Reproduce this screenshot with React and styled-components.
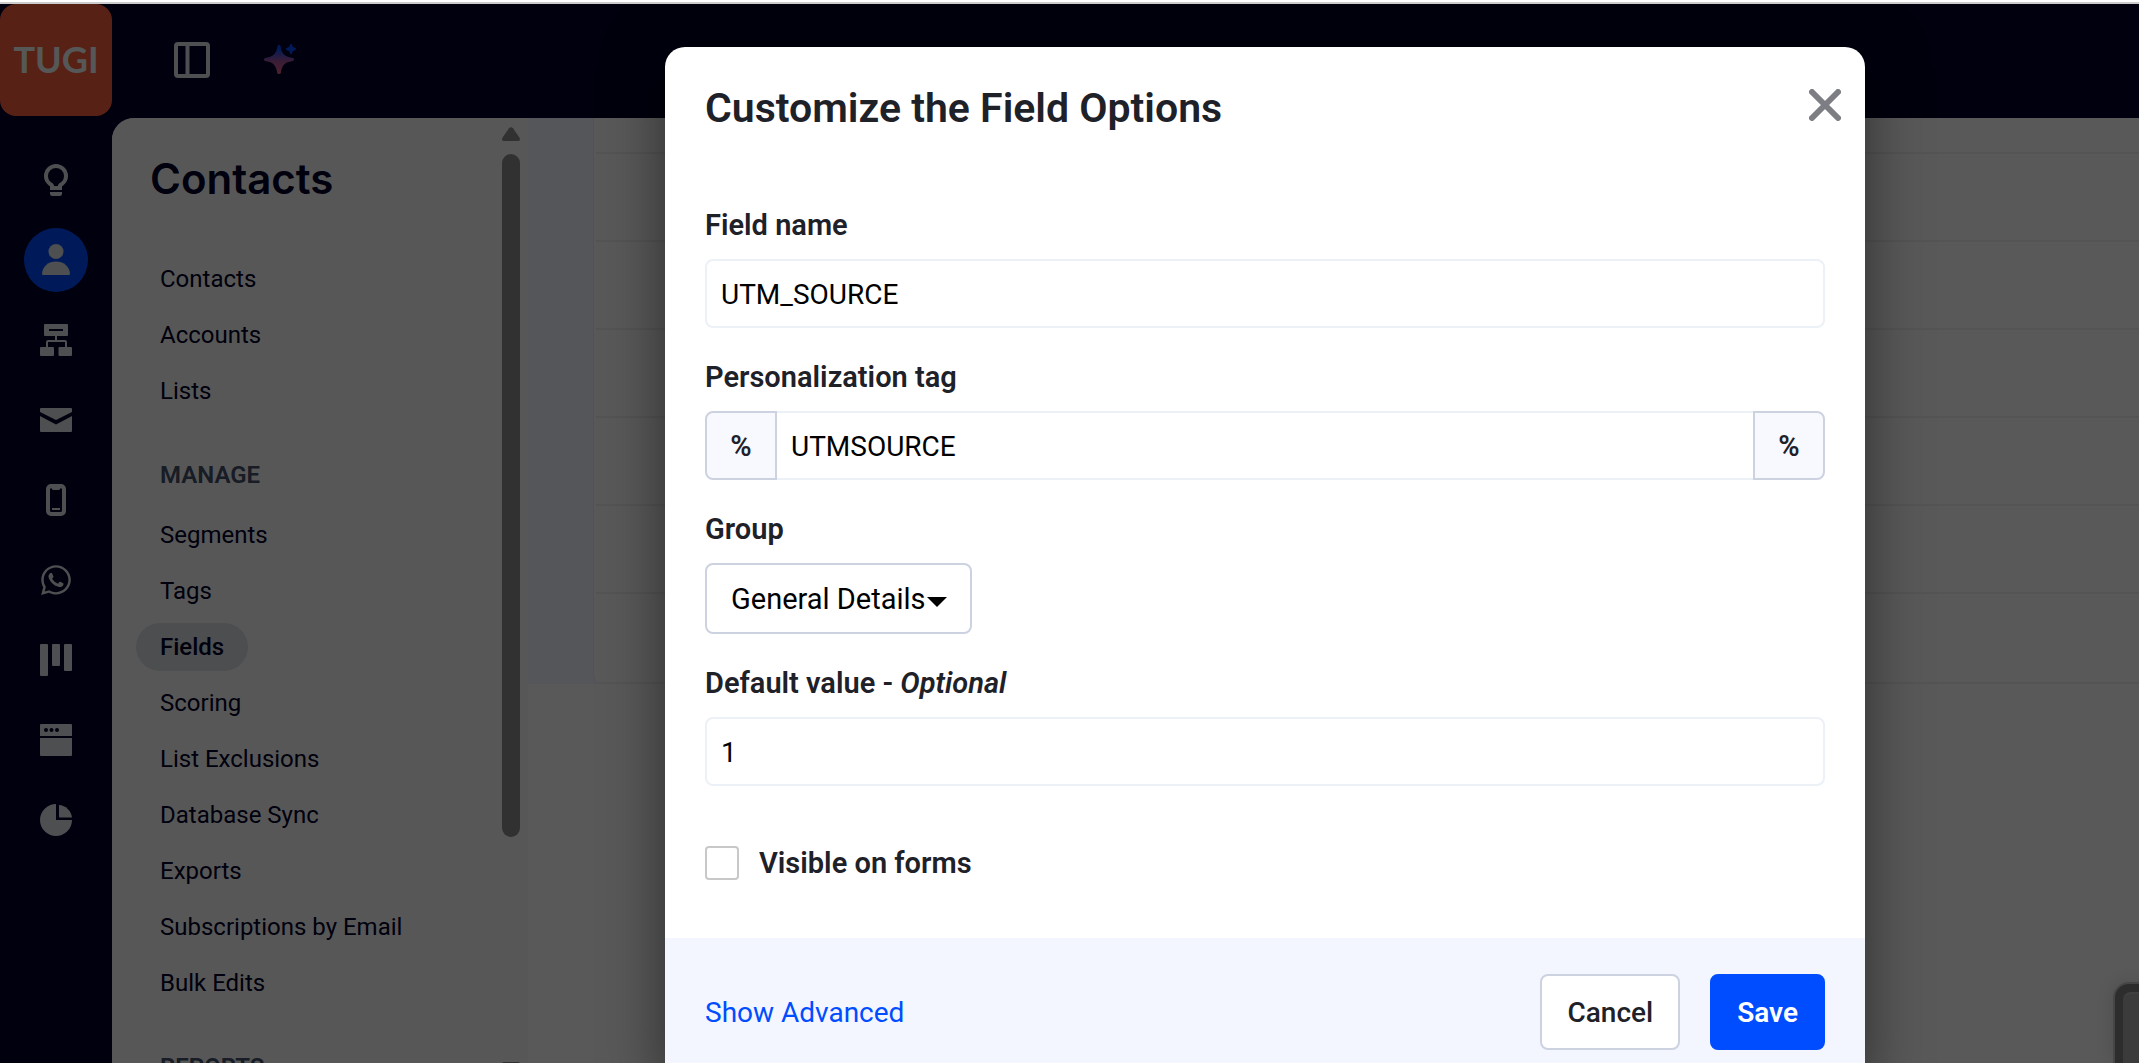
import React, { useState } from 'react';
import styled, { createGlobalStyle, css } from 'styled-components';
import { FaWhatsapp } from 'react-icons/fa';

const blue = '#004cff';
const navy = '#000028';
const ink = '#1f2129';
const iconGray = '#dce2e4';
const paleBlue = '#f3f6ff';
const inputBorder = '#ecf0f7';
const controlBorder = '#cdd2e1';

const GlobalStyle = createGlobalStyle`
  *,
  *::before,
  *::after {
    box-sizing: border-box;
  }

  body {
    margin: 0;
    overflow: hidden;
    font-family: Roboto, 'Noto Sans', sans-serif;
    color: ${ink};
  }

  button,
  input,
  select {
    font: inherit;
    color: inherit;
  }
`;

const Page = styled.div`
  display: flex;
  flex-direction: column;
  height: 100vh;
  border-top: 2px solid #fff;
`;

const WindowEdge = styled.div`
  flex: none;
  height: 2px;
  background-color: #ccc;
`;

const Shell = styled.div`
  position: relative;
  flex: 1;
  min-height: 0;
  display: grid;
  grid-template-columns: 112px 1fr;
  grid-template-rows: 114px 1fr;
  background-color: ${navy};
  overflow: hidden;
`;

const Logo = styled.a`
  display: flex;
  align-items: center;
  justify-content: center;
  height: 112px;
  padding-bottom: 2px;
  border-radius: 16px;
  background-color: #fc5f3f;
  color: #f5fbfb;
  font-family: Lato, sans-serif;
  font-size: 36px;
  font-weight: 700;
  text-decoration: none;
`;

const TopBar = styled.header`
  display: flex;
  align-items: center;
  gap: 54px;
  padding: 0 0 2px 62px;
`;

const IconButton = styled.button`
  display: flex;
  padding: 0;
  border: 0;
  background: none;
  color: ${iconGray};
`;

const Rail = styled.nav`
  display: flex;
  flex-direction: column;
  align-items: center;
  gap: 16px;
  padding-top: 30px;
`;

const RailLink = styled.a`
  flex: none;
  display: flex;
  align-items: center;
  justify-content: center;
  width: 64px;
  height: 64px;
  border-radius: 50%;
  color: ${iconGray};
  background-color: ${props => (props.$active ? blue : 'transparent')};
`;

const Main = styled.main`
  display: flex;
  min-height: 0;
  min-width: 0;
  border-top-left-radius: 22px;
  background-color: #fff;
  overflow: hidden;
`;

const Panel = styled.aside`
  flex: none;
  display: flex;
  justify-content: space-between;
  width: 416px;
  background-color: #fafafa;
`;

const PanelBody = styled.div`
  padding: 37px 0 0 24px;
  overflow: hidden;
`;

const PanelTitle = styled.h1`
  margin: 0 0 52px 14px;
  font-family: Inter, sans-serif;
  font-size: 42px;
  font-weight: 600;
  line-height: 48px;
  color: ${navy};
`;

const NavSection = styled.section`
  margin-bottom: 36px;
`;

const NavHeading = styled.h2`
  margin: 0 0 12px 24px;
  font-size: 24px;
  font-weight: 600;
  line-height: 48px;
  color: #44506a;
`;

const NavList = styled.ul`
  display: flex;
  flex-direction: column;
  align-items: flex-start;
  gap: 8px;
  margin: 0;
  padding: 0;
  list-style: none;
`;

const NavLink = styled.a`
  display: block;
  padding: 0 24px;
  border-radius: 24px;
  font-size: 24px;
  line-height: 48px;
  color: ${navy};
  text-decoration: none;

  ${props =>
    props.$active &&
    css`
      font-weight: 500;
      background-color: #dbdfe2;
    `};
`;

const ScrollBar = styled.div`
  display: flex;
  flex-direction: column;
  width: 18px;
  margin: 9px 8px 0 0;
  color: #8c8c8c;

  svg {
    flex: none;
  }
`;

const ScrollTrack = styled.div`
  flex: 1;
  margin: 13px 0 8px;
`;

const ScrollThumb = styled.div`
  height: 76%;
  border-radius: 9px;
  background-color: currentColor;
`;

const ScrollEnd = styled.div`
  height: 2px;
`;

const Content = styled.div`
  flex: 1;
  min-width: 0;
`;

const ContentBand = styled.div`
  padding-left: 65px;
  background-color: ${paleBlue};
`;

const Card = styled.div`
  padding-left: 2px;
  border-left: 1px solid #edf0f4;
  border-bottom-left-radius: 10px;
  background-color: #fff;
  overflow: hidden;
`;

const CardRow = styled.div`
  height: ${props => (props.$clipped ? 36 : 88)}px;
  border-bottom: 2px solid #f0f0f0;

  &:last-child {
    height: 90px;
  }
`;

const ChatBubble = styled.div`
  position: absolute;
  right: 0;
  bottom: 0;
  width: 26px;
  height: 81px;
  padding: 8px 0 0 8px;
  border-top: 2px solid #c8c8c8;
  border-left: 2px solid #c8c8c8;
  border-top-left-radius: 16px;
  background-color: #808080;
  box-shadow: 0 0 20px rgba(0, 0, 0, 0.15);
`;

const ChatInner = styled.div`
  height: 100%;
  border-top: 2px solid #b8b8b8;
  border-top-left-radius: 8px;
  background-color: #a8a8a8;
`;

const Backdrop = styled.div`
  position: absolute;
  inset: 0;
  display: flex;
  justify-content: center;
  align-items: flex-start;
  padding: 43px 0 0 391px;
  background-color: rgba(0, 0, 0, 0.65);
`;

const Dialog = styled.form`
  width: 1200px;
  max-width: 100%;
  border-radius: 20px;
  background-color: #fff;
  box-shadow: 0 10px 60px rgba(0, 0, 0, 0.5);
  overflow: hidden;
`;

const DialogHeader = styled.div`
  display: flex;
  align-items: center;
  justify-content: space-between;
  padding: 34px 24px 0 40px;
`;

const DialogTitle = styled.h2`
  margin: 0;
  font-size: 41px;
  font-weight: 600;
  line-height: 54px;
`;

const CloseButton = styled(IconButton)`
  padding-bottom: 6px;
  color: #7d7e83;
`;

const DialogBody = styled.div`
  display: flex;
  flex-direction: column;
  gap: 28px;
  padding: 69px 40px 58px;
`;

const Field = styled.div`
  display: flex;
  flex-direction: column;
  align-items: flex-start;
  gap: 13px;
`;

const labelText = css`
  font-size: 29px;
  font-weight: 600;
  line-height: 42px;
`;

const Label = styled.label`
  ${labelText};
`;

const TextInput = styled.input`
  width: 100%;
  height: 69px;
  padding: 2px 14px 0;
  border: 2px solid ${inputBorder};
  border-radius: 8px;
  background-color: #fff;
  font-size: 28px;
  color: #000;
`;

const InputGroup = styled.div`
  display: flex;
  width: 100%;

  ${TextInput} {
    flex: 1;
    min-width: 0;
    border-width: 2px 0;
    border-radius: 0;
  }
`;

const Addon = styled.span`
  display: flex;
  align-items: center;
  justify-content: center;
  width: 72px;
  border: 2px solid ${controlBorder};
  border-radius: ${props => (props.$end ? '0 8px 8px 0' : '8px 0 0 8px')};
  background-color: #f8f9ff;
  ${labelText};
`;

const SelectBox = styled.div`
  position: relative;

  svg {
    position: absolute;
    right: 25px;
    top: 34px;
    pointer-events: none;
  }
`;

const Select = styled.select`
  display: block;
  height: 71px;
  padding: 0 44px 0 24px;
  border: 2px solid ${controlBorder};
  border-radius: 8px;
  background-color: #fff;
  font-size: 29px;
  color: #000;
  appearance: none;
`;

const CheckRow = styled.label`
  display: flex;
  align-items: center;
  gap: 20px;
  margin-top: 32px;
  height: 34px;
  ${labelText};
`;

const CheckBox = styled.input`
  width: 34px;
  height: 34px;
  margin: 0;
  border: 2px solid #c8c8c8;
  border-radius: 4px;
  background-color: #fff;
  appearance: none;

  &:checked {
    border-color: ${blue};
    background-color: ${blue};
  }
`;

const DialogFooter = styled.div`
  display: flex;
  align-items: center;
  gap: 30px;
  padding: 36px 40px;
  background-color: ${paleBlue};
`;

const AdvancedLink = styled.a`
  margin-right: auto;
  padding-top: 2px;
  font-size: 28px;
  line-height: 42px;
  color: ${blue};
  text-decoration: none;
`;

const Button = styled.button`
  height: 76px;
  padding: 0 25px;
  border: 2px solid ${props => (props.$primary ? blue : controlBorder)};
  border-radius: 8px;
  background-color: ${props => (props.$primary ? blue : '#fff')};
  font-size: 28px;
  font-weight: ${props => (props.$primary ? 600 : 500)};
  color: ${props => (props.$primary ? '#fff' : ink)};
`;

const PanelIcon = () => (
  <svg width="36" height="36" viewBox="0 0 36 36" fill="none" stroke="currentColor" strokeWidth="4">
    <rect x="2" y="2" width="32" height="32" rx="2" />
    <path d="M13.5 2v32" />
  </svg>
);

const SparkleIcon = () => (
  <svg width="32" height="32" viewBox="0 0 32 32">
    <defs>
      <linearGradient id="sparkle" x1="0" y1="0" x2="0" y2="1">
        <stop offset="0.1" stopColor="#004cff" />
        <stop offset="0.55" stopColor="#a0529c" />
        <stop offset="1" stopColor="#e0607e" />
      </linearGradient>
    </defs>
    <path
      fill="url(#sparkle)"
      d="M15 1c.9 0 1.500.6 1.600 1.500C17.500 9.500 20.500 12.700 28 13.700c1.200.1 2 .8 2 1.800s-.8 1.600-2 1.800C21 18.300 18 21 16.900 28.500c-.2 1-.9 1.500-1.900 1.500s-1.700-.5-1.900-1.500C12 21 9 18.300 2 17.300c-1.200-.2-2-.8-2-1.800s.8-1.700 2-1.800c7.500-1 10.500-4.200 11.400-11.200C13.500 1.600 14.100 1 15 1z"
    />
    <path
      fill="#004cff"
      d="M27 0c.8 0 1 .5 1.200 1.500.3 1.200.8 1.700 2 2C31.400 3.800 32 4.200 32 5s-.6 1.200-1.800 1.500c-1.200.3-1.700.8-2 2C28 9.500 27.800 10 27 10s-1-.5-1.200-1.500c-.3-1.200-.8-1.700-2-2C22.600 6.200 22 5.800 22 5s.6-1.200 1.800-1.500c1.200-.3 1.700-.8 2-2C26 .5 26.200 0 27 0z"
    />
  </svg>
);

const BulbIcon = () => (
  <svg width="32" height="32" viewBox="0 0 32 32">
    <path
      fill="currentColor"
      fillRule="evenodd"
      d="M16 0a12 12 0 0 1 12 12c0 4.500-2.500 8-6 10.300V26H10v-3.700C6.500 20 4 16.500 4 12A12 12 0 0 1 16 0zm0 4a8 8 0 0 0-8 8c0 3.200 1.700 5.600 4.200 7.100.8.500 1.800 1.500 1.800 2.900h4c0-1.400 1-2.400 1.800-2.900 2.500-1.500 4.200-3.900 4.200-7.100a8 8 0 0 0-8-8z"
    />
    <path fill="currentColor" d="M10 28h12v1.500a2.500 2.500 0 0 1-2.500 2.500h-7a2.500 2.500 0 0 1-2.500-2.500z" />
  </svg>
);

const PersonIcon = () => (
  <svg width="28" height="32" viewBox="0 0 28 32" fill="currentColor">
    <circle cx="14" cy="7.500" r="7.500" />
    <path d="M0 29.500C.7 22 6.500 17.500 14 17.500S27.300 22 28 29.500c0 1-.6 1.500-1.500 1.500h-25C.6 31 0 30.500 0 29.500z" />
  </svg>
);

const FlowIcon = () => (
  <svg width="32" height="32" viewBox="0 0 32 32">
    <path
      fill="currentColor"
      fillRule="evenodd"
      d="M5 0h22a1 1 0 0 1 1 1v10a1 1 0 0 1-1 1H5a1 1 0 0 1-1-1V1a1 1 0 0 1 1-1zm4 5v2h14V5z"
    />
    <path fill="none" stroke="currentColor" strokeWidth="2" d="M16 12v5M7 23v-5a1 1 0 0 1 1-1h17a1 1 0 0 1 1 1v5" />
    <rect y="23" width="14" height="9" rx="1" fill="currentColor" />
    <rect x="18.500" y="23" width="13.500" height="9" rx="1" fill="currentColor" />
  </svg>
);

const MailIcon = () => (
  <svg width="32" height="24" viewBox="0 0 32 24" fill="currentColor">
    <path d="M1 0h30a1 1 0 0 1 1 1v3L16 12 0 4V1a1 1 0 0 1 1-1z" />
    <path d="M0 8l16 8.500L32 8v15a1 1 0 0 1-1 1H1a1 1 0 0 1-1-1z" />
  </svg>
);

const PhoneIcon = () => (
  <svg width="20" height="32" viewBox="0 0 20 32">
    <path
      fill="currentColor"
      fillRule="evenodd"
      d="M5 0h10a5 5 0 0 1 5 5v22a5 5 0 0 1-5 5H5a5 5 0 0 1-5-5V5a5 5 0 0 1 5-5zm.5 4A1.500 1.500 0 0 0 4 5.500v21A1.500 1.500 0 0 0 5.500 28h9a1.500 1.500 0 0 0 1.500-1.500v-21A1.500 1.500 0 0 0 14.500 4c0 1-.8 2-2 2h-5c-1.200 0-2-1-2-2z"
    />
    <path fill="currentColor" d="M6 24h8v2H6z" />
  </svg>
);

const BoardIcon = () => (
  <svg width="32" height="32" viewBox="0 0 32 32" fill="currentColor">
    <rect width="8" height="32" rx="1" />
    <rect x="12" width="8" height="22" rx="1" />
    <rect x="24" width="8" height="27" rx="1" />
  </svg>
);

const BrowserIcon = () => (
  <svg width="32" height="32" viewBox="0 0 32 32" fill="currentColor">
    <path
      fillRule="evenodd"
      d="M1 0h30a1 1 0 0 1 1 1v11H0V1a1 1 0 0 1 1-1zm5 4a2 2 0 1 0 0 4 2 2 0 0 0 0-4zm5.500 0a2 2 0 1 0 0 4 2 2 0 0 0 0-4zm5.500 0a2 2 0 1 0 0 4 2 2 0 0 0 0-4z"
    />
    <path d="M0 14h32v17a1 1 0 0 1-1 1H1a1 1 0 0 1-1-1z" />
  </svg>
);

const PieIcon = () => (
  <svg width="32" height="32" viewBox="0 0 32 32" fill="currentColor">
    <path d="M16 0v16h16A16 16 0 1 1 16 0z" />
    <path d="M19 1a14 14 0 0 1 13 12.500H20a1 1 0 0 1-1-1z" />
  </svg>
);

const ScrollArrow = ({ down }) => (
  <svg width="18" height="14" viewBox="0 0 18 14" fill="currentColor">
    <path
      transform={down ? 'rotate(180 9 7)' : undefined}
      d="M7 1.200a2.800 2.800 0 0 1 4 0L17.400 10.500C18.500 12.300 17.800 14 16 14H2C.2 14-.5 12.300.6 10.500z"
    />
  </svg>
);

const railItems = [
  { label: 'Ideas', icon: <BulbIcon /> },
  { label: 'Contacts', icon: <PersonIcon />, active: true },
  { label: 'Automations', icon: <FlowIcon /> },
  { label: 'Campaigns', icon: <MailIcon /> },
  { label: 'SMS', icon: <PhoneIcon /> },
  { label: 'WhatsApp', icon: <FaWhatsapp size={34} /> },
  { label: 'Deals', icon: <BoardIcon /> },
  { label: 'Website', icon: <BrowserIcon /> },
  { label: 'Reports', icon: <PieIcon /> },
];

const navSections = [
  { items: ['Contacts', 'Accounts', 'Lists'] },
  {
    title: 'MANAGE',
    items: [
      'Segments',
      'Tags',
      'Fields',
      'Scoring',
      'List Exclusions',
      'Database Sync',
      'Exports',
      'Subscriptions by Email',
      'Bulk Edits',
    ],
  },
  { title: 'REPORTS', items: [] },
];

const FieldDialog = () => {
  const [name, setName] = useState('UTM_SOURCE');
  const [tag, setTag] = useState('UTMSOURCE');
  const [value, setValue] = useState('1');

  return (
    <Dialog role="dialog" aria-labelledby="dialog-title">
      <DialogHeader>
        <DialogTitle id="dialog-title">Customize the Field Options</DialogTitle>
        <CloseButton type="button" aria-label="Close">
          <svg width="32" height="32" viewBox="0 0 32 32" stroke="currentColor" strokeWidth="6" strokeLinecap="round">
            <path d="M3 3l26 26M29 3L3 29" />
          </svg>
        </CloseButton>
      </DialogHeader>
      <DialogBody>
        <Field>
          <Label htmlFor="field-name">Field name</Label>
          <TextInput id="field-name" value={name} onChange={e => setName(e.target.value)} />
        </Field>
        <Field>
          <Label htmlFor="field-tag">Personalization tag</Label>
          <InputGroup>
            <Addon>%</Addon>
            <TextInput id="field-tag" value={tag} onChange={e => setTag(e.target.value)} />
            <Addon $end>%</Addon>
          </InputGroup>
        </Field>
        <Field>
          <Label htmlFor="field-group">Group</Label>
          <SelectBox>
            <Select id="field-group">
              <option>General Details</option>
            </Select>
            <svg width="20" height="10" viewBox="0 0 20 10">
              <path d="M0 0h20L10 10z" />
            </svg>
          </SelectBox>
        </Field>
        <Field>
          <Label htmlFor="field-default">
            Default value - <em>Optional</em>
          </Label>
          <TextInput id="field-default" value={value} onChange={e => setValue(e.target.value)} />
        </Field>
        <CheckRow>
          <CheckBox type="checkbox" />
          Visible on forms
        </CheckRow>
      </DialogBody>
      <DialogFooter>
        <AdvancedLink href="#advanced">Show Advanced</AdvancedLink>
        <Button type="button">Cancel</Button>
        <Button type="button" $primary>
          Save
        </Button>
      </DialogFooter>
    </Dialog>
  );
};

export default () => (
  <Page>
    <GlobalStyle />
    <WindowEdge />
    <Shell>
      <Logo href="#home">TUGI</Logo>
      <TopBar>
        <IconButton aria-label="Toggle panel">
          <PanelIcon />
        </IconButton>
        <IconButton aria-label="Assistant">
          <SparkleIcon />
        </IconButton>
      </TopBar>
      <Rail>
        {railItems.map(item => (
          <RailLink key={item.label} href="#" aria-label={item.label} $active={item.active}>
            {item.icon}
          </RailLink>
        ))}
      </Rail>
      <Main>
        <Panel>
          <PanelBody>
            <PanelTitle>Contacts</PanelTitle>
            {navSections.map((section, i) => (
              <NavSection key={i}>
                {section.title && <NavHeading>{section.title}</NavHeading>}
                <NavList>
                  {section.items.map(item => (
                    <li key={item}>
                      <NavLink href="#" $active={item === 'Fields'}>
                        {item}
                      </NavLink>
                    </li>
                  ))}
                </NavList>
              </NavSection>
            ))}
          </PanelBody>
          <ScrollBar>
            <ScrollArrow />
            <ScrollTrack>
              <ScrollThumb />
            </ScrollTrack>
            {/* the lower arrow is cut off by the window */}
            <ScrollEnd>
              <ScrollArrow down />
            </ScrollEnd>
          </ScrollBar>
        </Panel>
        <Content>
          <ContentBand>
            <Card>
              <CardRow $clipped />
              {[1, 2, 3, 4, 5, 6].map(row => (
                <CardRow key={row} />
              ))}
            </Card>
          </ContentBand>
        </Content>
      </Main>
      <ChatBubble>
        <ChatInner />
      </ChatBubble>
      <Backdrop>
        <FieldDialog />
      </Backdrop>
    </Shell>
  </Page>
);
